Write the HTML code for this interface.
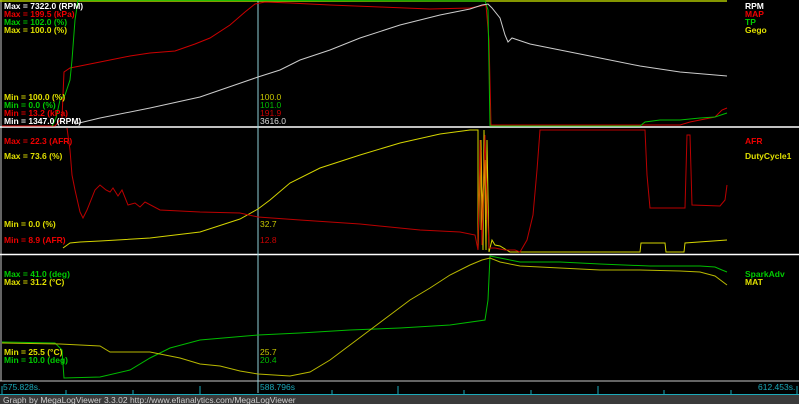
<!DOCTYPE html>
<html><head><style>
html,body{margin:0;padding:0;background:#000;width:799px;height:404px;overflow:hidden}
svg{display:block}
text{font-family:"Liberation Sans",sans-serif;font-size:8.5px;font-weight:bold}
.s{font-weight:normal}
</style></head><body>
<svg width="799" height="404" viewBox="0 0 799 404">
<rect width="799" height="404" fill="#000"/>
<!-- frame -->
<line x1="1" y1="0" x2="1" y2="381" stroke="#c8c8c8" stroke-width="1"/>
<line x1="0" y1="1" x2="727" y2="1" stroke="#b0c800" stroke-width="1.5"/>
<line x1="0" y1="127" x2="799" y2="127" stroke="#fff" stroke-width="1.5"/>
<line x1="0" y1="254.5" x2="799" y2="254.5" stroke="#fff" stroke-width="1.5"/>
<line x1="0" y1="381" x2="799" y2="381" stroke="#c8c8c8" stroke-width="1"/>
<line x1="258" y1="0" x2="258" y2="393" stroke="#8fd0d8" stroke-width="1"/>
<!-- top panel -->
<polyline fill="none" stroke="#c00" stroke-width="1" points="2,126 55,126 62,118 64,72 70,68 80,66 100,62 130,56 150,53 175,51 195,44 210,38 230,25 245,12 255,4 265,2 290,3 330,5 380,7 430,9 470,8 486,5 489,40 491,125 680,125 690,122 700,120 715,117 722,110 727,108"/>
<polyline fill="none" stroke="#0b0" stroke-width="1" points="52,126 56,118 60,100 65,95 70,80 72,60 75,20 78,0 485,1 488,10 490,126 640,126 645,122 660,120 680,120 700,118 715,117 727,113"/>
<polyline fill="none" stroke="#ccc" stroke-width="1" points="75,124 100,118 150,108 200,97 258,77 280,70 300,60 330,50 360,38 400,25 440,15 470,9 482,5 488,4 492,8 500,18 505,35 508,42 512,38 530,44 560,50 600,58 640,66 680,72 727,76"/>
<!-- middle panel -->
<polyline fill="none" stroke="#d4d400" stroke-width="1" points="63,248 70,243 80,242 100,241 150,238 200,232 240,219 258,209 270,200 290,183 320,168 360,155 400,143 440,134 470,130 478,130 478,250 481,140 483,250 484,130 486,250 487,140 489,252 492,240 495,245 500,246 510,252 640,252 641,243 665,243 666,252 684,252 685,243 727,240"/>
<polyline fill="none" stroke="#b00" stroke-width="1" points="67,128 70,150 72,175 75,190 80,212 83,218 87,210 95,190 100,185 106,190 110,192 113,188 118,196 122,190 128,205 135,203 140,207 145,202 160,210 200,212 240,213 258,217 300,220 360,224 420,230 460,232 475,235 478,250 480,140 482,245 485,135 487,200 489,248 495,248 505,250 515,250 520,252 527,240 533,215 537,170 540,130 645,130 647,175 650,208 685,208 687,135 690,135 692,205 720,206 725,200 727,185"/>
<polyline fill="none" stroke="#e08000" stroke-width="1" points="481,150 481,230 485,160 486,220"/>
<!-- bottom panel -->
<polyline fill="none" stroke="#0b0" stroke-width="1" points="2,342 55,343 62,350 64,378 100,377 130,370 150,358 170,348 200,340 258,335 300,333 350,330 400,328 450,325 485,320 488,300 490,256 500,258 520,262 560,262 600,264 650,266 700,266 715,267 722,270 727,272"/>
<polyline fill="none" stroke="#b8b800" stroke-width="1" points="2,343 60,344 100,346 110,352 150,352 180,358 200,364 220,366 240,371 258,374 290,376 310,372 330,360 350,345 370,330 390,315 410,300 430,288 450,275 470,265 482,260 490,258 500,262 520,266 560,268 600,270 640,270 680,271 700,272 715,276 727,285"/>
<!-- top labels -->
<text x="4" y="9" fill="#fff">Max = 7322.0 (RPM)</text>
<text x="4" y="17" fill="#e00">Max = 199.5 (kPa)</text>
<text x="4" y="25" fill="#0c0">Max = 102.0 (%)</text>
<text x="4" y="33" fill="#e0e000">Max = 100.0 (%)</text>
<text x="4" y="100" fill="#e0e000">Min = 100.0 (%)</text>
<text x="4" y="108" fill="#0c0">Min = 0.0 (%)</text>
<text x="4" y="116" fill="#e00">Min = 13.2 (kPa)</text>
<text x="4" y="124" fill="#fff">Min = 1347.0 (RPM)</text>
<text class="s" x="260" y="100" fill="#c8c800">100.0</text>
<text class="s" x="260" y="108" fill="#0b0">101.0</text>
<text class="s" x="260" y="116" fill="#c00">191.9</text>
<text class="s" x="260" y="124" fill="#ddd">3616.0</text>
<text x="745" y="9" fill="#fff">RPM</text>
<text x="745" y="17" fill="#e00">MAP</text>
<text x="745" y="25" fill="#0c0">TP</text>
<text x="745" y="33" fill="#e0e000">Gego</text>
<!-- middle labels -->
<text x="4" y="144" fill="#e00">Max = 22.3 (AFR)</text>
<text x="4" y="159" fill="#e0e000">Max = 73.6 (%)</text>
<text x="4" y="227" fill="#e0e000">Min = 0.0 (%)</text>
<text x="4" y="243" fill="#e00">Min = 8.9 (AFR)</text>
<text class="s" x="260" y="227" fill="#c8c800">32.7</text>
<text class="s" x="260" y="243" fill="#c00">12.8</text>
<text x="745" y="144" fill="#e00">AFR</text>
<text x="745" y="159" fill="#e0e000">DutyCycle1</text>
<!-- bottom labels -->
<text x="4" y="277" fill="#0c0">Max = 41.0 (deg)</text>
<text x="4" y="285" fill="#e0e000">Max = 31.2 (°C)</text>
<text x="4" y="355" fill="#e0e000">Min = 25.5 (°C)</text>
<text x="4" y="363" fill="#0c0">Min = 10.0 (deg)</text>
<text class="s" x="260" y="355" fill="#c8c800">25.7</text>
<text class="s" x="260" y="363" fill="#0b0">20.4</text>
<text x="745" y="277" fill="#0c0">SparkAdv</text>
<text x="745" y="285" fill="#e0e000">MAT</text>
<!-- time axis -->
<line x1="0" y1="394.5" x2="799" y2="394.5" stroke="#1aa8b8" stroke-width="1"/>
<g stroke="#1aa8b8" stroke-width="1">
<line x1="2" y1="386" x2="2" y2="394"/><line x1="66" y1="390" x2="66" y2="394"/><line x1="133" y1="390" x2="133" y2="394"/><line x1="200" y1="386" x2="200" y2="394"/><line x1="332" y1="390" x2="332" y2="394"/><line x1="398" y1="386" x2="398" y2="394"/><line x1="464" y1="390" x2="464" y2="394"/><line x1="531" y1="390" x2="531" y2="394"/><line x1="598" y1="386" x2="598" y2="394"/><line x1="664" y1="390" x2="664" y2="394"/><line x1="731" y1="390" x2="731" y2="394"/><line x1="797" y1="386" x2="797" y2="394"/>
</g>
<text class="s" x="3" y="390" fill="#1aa8b8">575.828s.</text>
<text class="s" x="260" y="390" fill="#1aa8b8">588.796s</text>
<text class="s" x="758" y="390" fill="#1aa8b8">612.453s.</text>
<rect x="0" y="395" width="799" height="9" fill="#3a3a3a"/>
<text class="s" x="3" y="403" fill="#d0d0d0">Graph by MegaLogViewer 3.3.02 http://www.efianalytics.com/MegaLogViewer</text>
</svg>
</body></html>
